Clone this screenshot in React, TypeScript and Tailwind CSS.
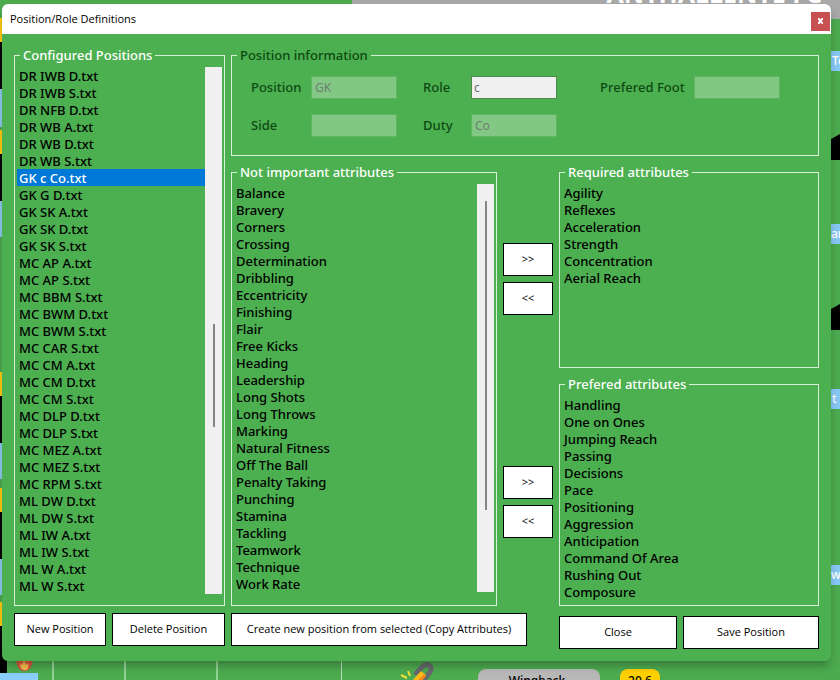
const configured = [
  'DR IWB D.txt', 'DR IWB S.txt', 'DR NFB D.txt', 'DR WB A.txt', 'DR WB D.txt', 'DR WB S.txt',
  'GK c Co.txt', 'GK G D.txt', 'GK SK A.txt', 'GK SK D.txt', 'GK SK S.txt',
  'MC AP A.txt', 'MC AP S.txt', 'MC BBM S.txt', 'MC BWM D.txt', 'MC BWM S.txt', 'MC CAR S.txt',
  'MC CM A.txt', 'MC CM D.txt', 'MC CM S.txt', 'MC DLP D.txt', 'MC DLP S.txt',
  'MC MEZ A.txt', 'MC MEZ S.txt', 'MC RPM S.txt',
  'ML DW D.txt', 'ML DW S.txt', 'ML IW A.txt', 'ML IW S.txt', 'ML W A.txt', 'ML W S.txt'
]

const notImportant = [
  'Balance', 'Bravery', 'Corners', 'Crossing', 'Determination', 'Dribbling', 'Eccentricity',
  'Finishing', 'Flair', 'Free Kicks', 'Heading', 'Leadership', 'Long Shots', 'Long Throws',
  'Marking', 'Natural Fitness', 'Off The Ball', 'Penalty Taking', 'Punching', 'Stamina',
  'Tackling', 'Teamwork', 'Technique', 'Work Rate'
]

const required = ['Agility', 'Reflexes', 'Acceleration', 'Strength', 'Concentration', 'Aerial Reach']

const prefered = [
  'Handling', 'One on Ones', 'Jumping Reach', 'Passing', 'Decisions', 'Pace', 'Positioning',
  'Aggression', 'Anticipation', 'Command Of Area', 'Rushing Out', 'Composure'
]

interface GroupProps {
  title: string
  className?: string
  muted?: boolean
  children: React.ReactNode
}

function Group({ title, className = '', muted, children }: GroupProps) {
  return (
    <fieldset className={`min-w-0 border border-[#d8efd9] px-0.5 ${className}`}>
      <legend className={`ml-[3px] px-[3px] leading-[18px] ${muted ? 'text-[#0d4a12]' : 'text-white'}`}>{title}</legend>
      {children}
    </fieldset>
  )
}

function ListBox({ label, items, selected }: { label: string; items: string[]; selected?: string }) {
  return (
    <ul role="listbox" aria-label={label} className="min-w-0 flex-1 leading-4">
      {items.map((item) => (
        <li
          key={item}
          role="option"
          aria-selected={item === selected}
          className={`whitespace-nowrap px-0.5 pt-px ${item === selected ? 'bg-[#0078d7] text-white' : ''}`}
        >
          {item}
        </li>
      ))}
    </ul>
  )
}

function Scrollbar({ thumb }: { thumb: string }) {
  return (
    <div className="flex w-[17px] justify-center bg-[#f0f0f0]">
      <div className={`w-0.5 bg-[#858585] ${thumb}`} />
    </div>
  )
}

function Field({ id, label, value = '', labelWidth, enabled, className = '' }: {
  id: string
  label: string
  value?: string
  labelWidth: string
  enabled?: boolean
  className?: string
}) {
  return (
    <div className={`flex items-center ${className}`}>
      <label htmlFor={id} className={`shrink-0 ${labelWidth}`}>{label}</label>
      <input
        id={id}
        type="text"
        defaultValue={value}
        disabled={!enabled}
        className={`h-[23px] w-[86px] border text-xs font-normal ${
          enabled
            ? 'border-[#4c8a4e] bg-[#f0f0f0] px-0.5 text-[#6d6d6d]'
            : 'border-[#5fb562] bg-[#83c785] px-[3px] text-[#6d8070]'
        }`}
      />
    </div>
  )
}

function Button({ children, className = '' }: { children: React.ReactNode; className?: string }) {
  return (
    <button
      type="button"
      className={`h-[33px] whitespace-nowrap border border-black bg-white text-center font-['Open_Sans','Noto_Sans',sans-serif] text-[11px] font-medium text-black ${className}`}
    >
      {children}
    </button>
  )
}

// Parts of the main form that stay visible around the dialog
function MainForm() {
  return (
    <div aria-hidden="true" className="absolute inset-0 overflow-hidden bg-[#4caa4f] text-white">
      <div className="absolute left-[352px] right-0 top-0 h-[19px] bg-[#a8a8a8]" />
      <div className="absolute right-[18px] -top-[23px] whitespace-nowrap text-[25px] font-bold leading-8">ANTHALLENTE FC</div>

      <div className="absolute left-0 top-[18px] h-6 w-2 bg-[#ffcc10]" />
      <div className="absolute left-0 top-[42px] h-[47px] w-2 bg-black" />
      <div className="absolute left-0 top-[89px] h-[38px] w-2 bg-[#8fc8f0]" />
      <div className="absolute left-0 top-[130px] h-6 w-2 bg-[#ffcc10]" />
      <div className="absolute left-0 top-[154px] h-[47px] w-2 bg-black" />
      <div className="absolute left-0 top-[201px] h-9 w-2 bg-[#8fc8f0]" />
      <div className="absolute left-0 top-[372px] h-6 w-2 bg-[#ffcc10]" />
      <div className="absolute left-0 top-[396px] h-[47px] w-2 bg-black" />
      <div className="absolute left-0 top-[443px] h-9 w-2 bg-[#8fc8f0]" />
      <div className="absolute left-0 top-[488px] h-6 w-2 bg-[#ffcc10]" />
      <div className="absolute left-0 top-[512px] h-[47px] w-2 bg-black" />
      <div className="absolute left-0 top-[559px] h-9 w-2 bg-[#8fc8f0]" />
      <div className="absolute left-0 top-[602px] h-6 w-2 bg-[#ffcc10]" />
      <div className="absolute left-0 top-[626px] h-[47px] w-[7px] bg-black" />
      <div className="absolute left-0 top-[673px] h-[7px] w-[38px] bg-[#87cefa]" />

      <div className="absolute left-[831px] top-[51px] h-5 w-10 bg-[#87c8f5] pl-px text-xs leading-5">Te</div>
      <div className="absolute left-[831px] top-[224px] h-5 w-10 bg-[#87c8f5] text-xs leading-5">ar</div>
      <div className="absolute left-[831px] top-[389px] h-5 w-10 bg-[#87c8f5] pl-px text-xs leading-5">t</div>
      <div className="absolute left-[831px] top-[565px] h-5 w-10 bg-[#87c8f5] text-xs leading-5">wi</div>
      <svg className="absolute left-[831px] top-[134px]" width="9" height="26">
        <path d="M0 5 9 0V26H0Z" />
      </svg>
      <svg className="absolute left-[831px] top-[304px]" width="9" height="26">
        <path d="M0 5 9 0V26H0Z" />
      </svg>

      <div className="absolute left-[52px] top-[660px] h-5 w-0.5 bg-[#92d594]" />
      <div className="absolute left-[124px] top-[660px] h-5 w-0.5 bg-[#92d594]" />
      <div className="absolute left-[216px] top-[660px] h-5 w-0.5 bg-[#92d594]" />
      <div className="absolute left-[341px] top-[660px] h-5 w-px bg-[#b9dfba]" />
      <svg className="absolute left-4 top-[656px]" width="17" height="16" viewBox="0 0 17 16">
        <path d="M0 4C1 10 3 15 8.500 15S16 10 17 3L12 0H5Z" fill="#e2533d" />
        <path d="M4 7C4 12 6 14 9 14S13 11 12 7L10 9 8 4 6 9Z" fill="#f6c04d" />
      </svg>
      <svg className="absolute left-[400px] top-[662px]" width="36" height="20" viewBox="0 0 36 20" fill="none">
        <path d="M15 13 22 5C27 0 34 4 30 10L23 19" stroke="#66696b" strokeWidth="5" />
        <path d="M11 20 21 9 26 13 20 20Z" fill="#fbbc16" />
        <path d="M16 20 24 12 26 14 21 20Z" fill="#f58a1c" />
        <path d="m8 9 2 5M1 13l6 3" stroke="#f6de35" strokeWidth="2" />
      </svg>
      <div className="absolute left-[478px] top-[669px] h-6 w-[122px] rounded-lg bg-[#b8b8b8] pr-1 text-center text-xs leading-6 text-black">Wingback</div>
      <div className="absolute left-[620px] top-[669px] h-6 w-10 rounded-lg bg-[#ffd000] text-center text-xs leading-6 text-black">20.6</div>
    </div>
  )
}

export default function App() {
  return (
    <div className="relative min-h-screen overflow-hidden pt-1 pr-[9px] pb-[19px] pl-0.5 font-['Noto_Sans','Open_Sans',sans-serif] text-[13px] font-medium text-black">
      <MainForm />

      <main className="relative rounded-md bg-[#4caf50] shadow-[0_6px_10px_-2px_rgba(0,0,0,0.3)]">
        <header className="flex h-[30px] items-center justify-between rounded-t-md bg-white pr-px pl-2">
          <h1 className="font-['Open_Sans','Noto_Sans',sans-serif] text-[11px] font-medium">Position/Role Definitions</h1>
          <button type="button" aria-label="Close window" className="mt-1 flex size-[19px] items-center justify-center bg-[#c75050]">
            <svg width="5" height="6" viewBox="0 0 5 6" fill="none" stroke="white" strokeWidth="2">
              <path d="M0 0 5 6M5 0 0 6" />
            </svg>
          </button>
        </header>

        <div className="px-3 pt-3 pb-3">
          <div className="flex gap-1.5">
            <Group title="Configured Positions" className="w-[211px] shrink-0">
              <div className="mt-[3px] flex">
                <ListBox label="Configured Positions" items={configured} selected="GK c Co.txt" />
                <Scrollbar thumb="mt-[257px] h-[103px]" />
              </div>
            </Group>

            <div className="flex min-w-0 flex-1 flex-col gap-[7px]">
              <Group title="Position information" muted className="h-[110px] text-[#0d4a12]">
                <div className="mt-3 ml-[17px] grid grid-cols-[max-content_max-content_max-content] gap-x-[26px] gap-y-[15px]">
                  <Field id="position" label="Position" value="GK" labelWidth="w-[60px]" />
                  <Field id="role" label="Role" value="c" labelWidth="w-12" enabled />
                  <Field id="foot" label="Prefered Foot" labelWidth="w-[94px]" className="pl-[17px]" />
                  <Field id="side" label="Side" labelWidth="w-[60px]" />
                  <Field id="duty" label="Duty" value="Co" labelWidth="w-12" />
                </div>
              </Group>

              <div className="flex flex-1 gap-1.5">
                <Group title="Not important attributes" className="w-[266px] shrink-0 pb-[13px]">
                  <div className="mt-[3px] flex">
                    <ListBox label="Not important attributes" items={notImportant} />
                    <Scrollbar thumb="mt-[17px] h-[309px]" />
                  </div>
                </Group>

                <div className="flex w-[50px] shrink-0 flex-col gap-[151px] pt-20">
                  <div className="flex flex-col gap-1.5">
                    <Button>&gt;&gt;</Button>
                    <Button>&lt;&lt;</Button>
                  </div>
                  <div className="flex flex-col gap-1.5">
                    <Button>&gt;&gt;</Button>
                    <Button>&lt;&lt;</Button>
                  </div>
                </div>

                <div className="flex min-w-0 flex-1 flex-col gap-[7px]">
                  <Group title="Required attributes" className="h-[205px]">
                    <div className="mt-[3px] flex">
                      <ListBox label="Required attributes" items={required} />
                    </div>
                  </Group>
                  <Group title="Prefered attributes" className="flex-1">
                    <div className="mt-[3px] flex">
                      <ListBox label="Prefered attributes" items={prefered} />
                    </div>
                  </Group>
                </div>
              </div>
            </div>
          </div>

          <div className="mt-[7px] flex items-start gap-1.5">
            <Button className="w-[92px]">New Position</Button>
            <Button className="w-[113px]">Delete Position</Button>
            <Button className="w-[296px]">Create new position from selected (Copy Attributes)</Button>
            <div className="mt-[3px] ml-auto flex gap-1.5">
              <Button className="w-[118px]">Close</Button>
              <Button className="w-[136px]">Save Position</Button>
            </div>
          </div>
        </div>
      </main>
    </div>
  )
}
